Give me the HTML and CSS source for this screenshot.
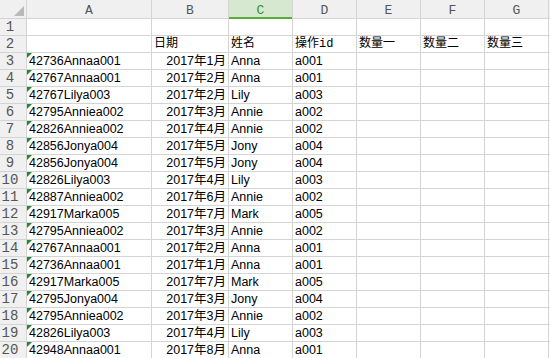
FILE: index.html
```html
<!DOCTYPE html>
<html>
<head>
  <meta charset="utf-8" />
  <title>Sheet1</title>
  <link rel="stylesheet" href="styles.css">
</head>
<body>
  <div class="sheet">
    <!-- column headers -->
    <div class="row">
      <div class="hd corner"><span class="tri"></span></div>
      <div class="hd">A</div>
      <div class="hd">B</div>
      <div class="hd sel">C</div>
      <div class="hd">D</div>
      <div class="hd">E</div>
      <div class="hd">F</div>
      <div class="hd">G</div>
      <div class="hd"></div>
    </div>

    <div class="row">
      <div class="rn">1</div>
      <div class="c"></div><div class="c"></div><div class="c"></div><div class="c"></div>
      <div class="c"></div><div class="c"></div><div class="c"></div><div class="c"></div>
    </div>
    <div class="row">
      <div class="rn">2</div>
      <div class="c"></div>
      <div class="c zh">日期</div>
      <div class="c zh">姓名</div>
      <div class="c zh">操作id</div>
      <div class="c zh">数量一</div>
      <div class="c zh">数量二</div>
      <div class="c zh">数量三</div>
      <div class="c"></div>
    </div>

    <div class="row">
      <div class="rn">3</div>
      <div class="c txt">42736Annaa001</div><div class="c r">2017年1月</div><div class="c">Anna</div><div class="c">a001</div>
      <div class="c"></div><div class="c"></div><div class="c"></div><div class="c"></div>
    </div>
    <div class="row">
      <div class="rn">4</div>
      <div class="c txt">42767Annaa001</div><div class="c r">2017年2月</div><div class="c">Anna</div><div class="c">a001</div>
      <div class="c"></div><div class="c"></div><div class="c"></div><div class="c"></div>
    </div>
    <div class="row">
      <div class="rn">5</div>
      <div class="c txt">42767Lilya003</div><div class="c r">2017年2月</div><div class="c">Lily</div><div class="c">a003</div>
      <div class="c"></div><div class="c"></div><div class="c"></div><div class="c"></div>
    </div>
    <div class="row">
      <div class="rn">6</div>
      <div class="c txt">42795Anniea002</div><div class="c r">2017年3月</div><div class="c">Annie</div><div class="c">a002</div>
      <div class="c"></div><div class="c"></div><div class="c"></div><div class="c"></div>
    </div>
    <div class="row">
      <div class="rn">7</div>
      <div class="c txt">42826Anniea002</div><div class="c r">2017年4月</div><div class="c">Annie</div><div class="c">a002</div>
      <div class="c"></div><div class="c"></div><div class="c"></div><div class="c"></div>
    </div>
    <div class="row">
      <div class="rn">8</div>
      <div class="c txt">42856Jonya004</div><div class="c r">2017年5月</div><div class="c">Jony</div><div class="c">a004</div>
      <div class="c"></div><div class="c"></div><div class="c"></div><div class="c"></div>
    </div>
    <div class="row">
      <div class="rn">9</div>
      <div class="c txt">42856Jonya004</div><div class="c r">2017年5月</div><div class="c">Jony</div><div class="c">a004</div>
      <div class="c"></div><div class="c"></div><div class="c"></div><div class="c"></div>
    </div>
    <div class="row">
      <div class="rn">10</div>
      <div class="c txt">42826Lilya003</div><div class="c r">2017年4月</div><div class="c">Lily</div><div class="c">a003</div>
      <div class="c"></div><div class="c"></div><div class="c"></div><div class="c"></div>
    </div>
    <div class="row">
      <div class="rn">11</div>
      <div class="c txt">42887Anniea002</div><div class="c r">2017年6月</div><div class="c">Annie</div><div class="c">a002</div>
      <div class="c"></div><div class="c"></div><div class="c"></div><div class="c"></div>
    </div>
    <div class="row">
      <div class="rn">12</div>
      <div class="c txt">42917Marka005</div><div class="c r">2017年7月</div><div class="c">Mark</div><div class="c">a005</div>
      <div class="c"></div><div class="c"></div><div class="c"></div><div class="c"></div>
    </div>
    <div class="row">
      <div class="rn">13</div>
      <div class="c txt">42795Anniea002</div><div class="c r">2017年3月</div><div class="c">Annie</div><div class="c">a002</div>
      <div class="c"></div><div class="c"></div><div class="c"></div><div class="c"></div>
    </div>
    <div class="row">
      <div class="rn">14</div>
      <div class="c txt">42767Annaa001</div><div class="c r">2017年2月</div><div class="c">Anna</div><div class="c">a001</div>
      <div class="c"></div><div class="c"></div><div class="c"></div><div class="c"></div>
    </div>
    <div class="row">
      <div class="rn">15</div>
      <div class="c txt">42736Annaa001</div><div class="c r">2017年1月</div><div class="c">Anna</div><div class="c">a001</div>
      <div class="c"></div><div class="c"></div><div class="c"></div><div class="c"></div>
    </div>
    <div class="row">
      <div class="rn">16</div>
      <div class="c txt">42917Marka005</div><div class="c r">2017年7月</div><div class="c">Mark</div><div class="c">a005</div>
      <div class="c"></div><div class="c"></div><div class="c"></div><div class="c"></div>
    </div>
    <div class="row">
      <div class="rn">17</div>
      <div class="c txt">42795Jonya004</div><div class="c r">2017年3月</div><div class="c">Jony</div><div class="c">a004</div>
      <div class="c"></div><div class="c"></div><div class="c"></div><div class="c"></div>
    </div>
    <div class="row">
      <div class="rn">18</div>
      <div class="c txt">42795Anniea002</div><div class="c r">2017年3月</div><div class="c">Annie</div><div class="c">a002</div>
      <div class="c"></div><div class="c"></div><div class="c"></div><div class="c"></div>
    </div>
    <div class="row">
      <div class="rn">19</div>
      <div class="c txt">42826Lilya003</div><div class="c r">2017年4月</div><div class="c">Lily</div><div class="c">a003</div>
      <div class="c"></div><div class="c"></div><div class="c"></div><div class="c"></div>
    </div>
    <div class="row">
      <div class="rn">20</div>
      <div class="c txt">42948Annaa001</div><div class="c r">2017年8月</div><div class="c">Anna</div><div class="c">a001</div>
      <div class="c"></div><div class="c"></div><div class="c"></div><div class="c"></div>
    </div>
  </div>
</body>
</html>
```

FILE: styles.css
```css
html, body {
  margin: 0;
  background: #fff;
  overflow: hidden;
}
.sheet {
  display: grid;
  grid-template-columns: 26px 124px 76px repeat(5, 63px) 1fr;
  grid-template-rows: 18px;
  grid-auto-rows: 16px;
  gap: 1px;
  width: 550px;
  background: #d4d4d4;
  font-family: "Liberation Sans", "Noto Sans CJK SC", sans-serif;
  font-size: 12.5px;
  color: #000;
}
.row {
  display: contents;
}
.hd, .rn, .c {
  overflow: hidden;
  white-space: nowrap;
}
.hd {
  position: relative;
  box-sizing: border-box;
  padding-top: 3px;
  background: #f0f0f0;
  color: #555;
  font-family: "Liberation Mono", monospace;
  font-size: 13px;
  line-height: 15px;
  text-align: center;
}
.hd.sel {
  background: #d6e8d0;
  color: #3c8f2c;
  overflow: visible;
}
.hd.sel::after {
  content: "";
  position: absolute;
  left: 0;
  right: 0;
  bottom: -1px;
  height: 2px;
  background: #5aaa3a;
}
.corner {
  display: flex;
  justify-content: flex-end;
  align-items: flex-end;
  padding: 0 2px 2px 0;
}
.tri {
  width: 0;
  height: 0;
  border-left: 10px solid transparent;
  border-bottom: 10px solid #b9b9b9;
}
.rn {
  background: #f0f0f0;
  color: #555;
  font-family: "Liberation Mono", monospace;
  font-size: 14px;
  line-height: 17px;
  text-align: center;
  padding-right: 6px;
}
.c {
  position: relative;
  background: #fff;
  line-height: 16px;
  padding: 0 2px;
}
.c.r {
  text-align: right;
}
.c.zh {
  font-family: "Liberation Mono", "Noto Sans CJK SC", monospace;
  font-size: 12px;
}
.c.txt::before {
  content: "";
  position: absolute;
  left: 0;
  top: 0;
  border-top: 5px solid #1e8a2e;
  border-right: 5px solid transparent;
}
```
